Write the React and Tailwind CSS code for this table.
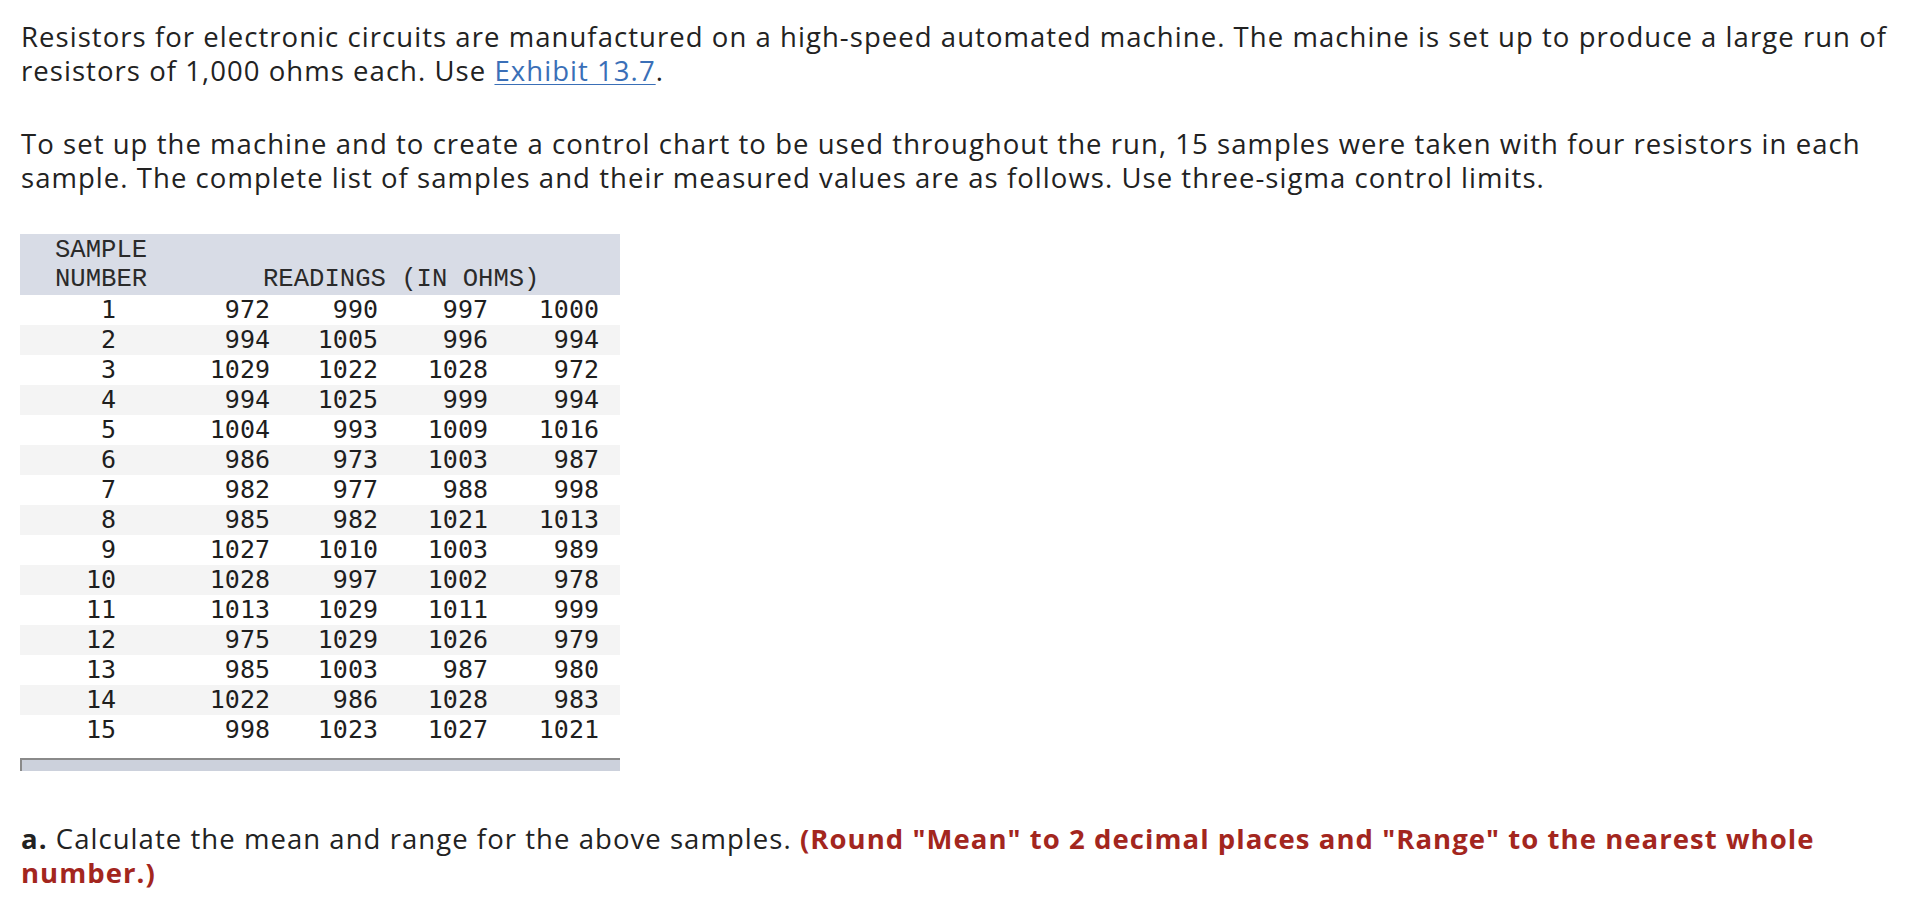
const rows = [
  [1, 972, 990, 997, 1000],
  [2, 994, 1005, 996, 994],
  [3, 1029, 1022, 1028, 972],
  [4, 994, 1025, 999, 994],
  [5, 1004, 993, 1009, 1016],
  [6, 986, 973, 1003, 987],
  [7, 982, 977, 988, 998],
  [8, 985, 982, 1021, 1013],
  [9, 1027, 1010, 1003, 989],
  [10, 1028, 997, 1002, 978],
  [11, 1013, 1029, 1011, 999],
  [12, 975, 1029, 1026, 979],
  [13, 985, 1003, 987, 980],
  [14, 1022, 986, 1028, 983],
  [15, 998, 1023, 1027, 1021],
];

const grid = "grid grid-cols-[110px_154px_108px_110px_118px]";

export default function App() {
  return (
    <div className="min-h-screen bg-white pl-[21px] pr-[4px] pt-[20px] text-[#222222] font-['Open_Sans',sans-serif] text-[27.5px] leading-[34px] tracking-[1.05px]">
      {/* Problem text */}
      <p>
        Resistors for electronic circuits are manufactured on a high-speed automated machine. The machine is set up to produce a large run of
        resistors of 1,000 ohms each. Use{" "}
        <a href="#" className="text-[#3a6fb7] underline underline-offset-[3px] decoration-1">Exhibit 13.7</a>.
      </p>
      <p className="mt-[39px]">
        To set up the machine and to create a control chart to be used throughout the run, 15 samples were taken with four resistors in each
        sample. The complete list of samples and their measured values are as follows. Use three-sigma control limits.
      </p>

      {/* Exhibit table */}
      <div className="mt-[39px] w-[600px] -ml-[1px] tracking-normal">
        <div className="bg-[#d8dce6] pt-[2px] pb-[1px] font-['Liberation_Mono',monospace] text-[25.6px] leading-[29px] text-[#2a2a2a]">
          <div className={grid}>
            <div className="col-span-5 pl-[35px]">SAMPLE</div>
          </div>
          <div className={grid}>
            <div className="pl-[35px]">NUMBER</div>
            <div className="col-span-4 pl-[133px]">READINGS (IN OHMS)</div>
          </div>
        </div>
        <div className="font-['DejaVu_Sans_Mono',monospace] text-[25px] leading-[30px] text-[#1e1e1e]">
          {rows.map((r, i) => (
            <div key={r[0]} className={`${grid} ${i % 2 === 1 ? "bg-[#f4f4f4]" : "bg-white"}`}>
              <div className="text-right pr-[14px]">{r[0]}</div>
              <div className="text-right pr-[14px]">{r[1]}</div>
              <div className="text-right pr-[14px]">{r[2]}</div>
              <div className="text-right pr-[14px]">{r[3]}</div>
              <div className="text-right pr-[21px]">{r[4]}</div>
            </div>
          ))}
        </div>
        <div className="mt-[13px] h-[13px] bg-[#ccd1dc] border-t-2 border-l-2 border-[#8a8a8a]" />
      </div>

      {/* Question */}
      <p className="mt-[51px]">
        <span className="font-bold">a.</span> Calculate the mean and range for the above samples.{" "}
        <span className="font-bold text-[#a3261e]">(Round "Mean" to 2 decimal places and "Range" to the nearest whole number.)</span>
      </p>
    </div>
  );
}
